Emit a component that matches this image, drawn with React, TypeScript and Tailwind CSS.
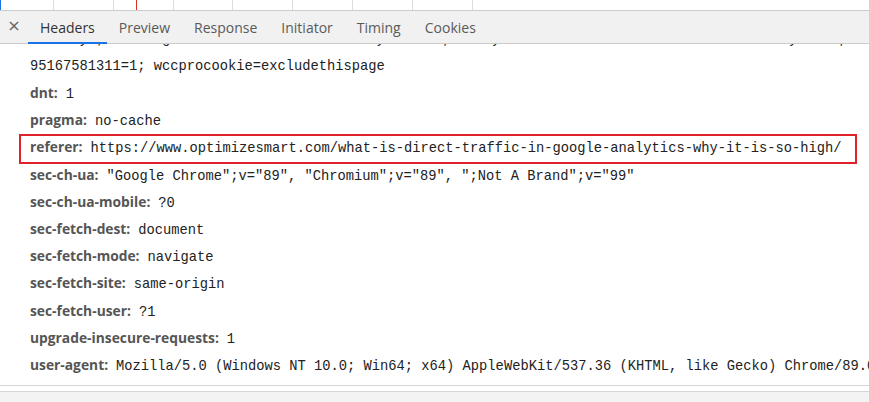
import React from "react";

const rows: [string, string][] = [
  ["dnt", "1"],
  ["pragma", "no-cache"],
  ["referer", "https://www.optimizesmart.com/what-is-direct-traffic-in-google-analytics-why-it-is-so-high/"],
  ["sec-ch-ua", "\"Google Chrome\";v=\"89\", \"Chromium\";v=\"89\", \";Not A Brand\";v=\"99\""],
  ["sec-ch-ua-mobile", "?0"],
  ["sec-fetch-dest", "document"],
  ["sec-fetch-mode", "navigate"],
  ["sec-fetch-site", "same-origin"],
  ["sec-fetch-user", "?1"],
  ["upgrade-insecure-requests", "1"],
  ["user-agent", "Mozilla/5.0 (Windows NT 10.0; Win64; x64) AppleWebKit/537.36 (KHTML, like Gecko) Chrome/89.0.4389.90 Safari/537.36"],
];

const mono = "font-['Liberation_Mono',monospace] text-[13.75px] text-[#222]";
const sans = "font-['Open_Sans',sans-serif] font-bold text-[13.8px] text-[#555]";

function Row({ name, value }: { name: string; value: string }) {
  const inner = (
    <div className="flex items-baseline whitespace-nowrap">
      <span className={sans}>{name}:</span>
      <span className={`${mono} ml-[8px] whitespace-pre`}>{value}</span>
    </div>
  );
  if (name === "referer") {
    return (
      <div className="h-[27.2px] flex items-center">
        <div className="ml-[19px] w-[838px] h-[30px] border-2 border-[#e0222c] pl-[9px] flex items-center shrink-0">
          {inner}
        </div>
      </div>
    );
  }
  return <div className="h-[27.2px] flex items-center pl-[30px]">{inner}</div>;
}

export default function App() {
  const gridLines = [53, 113, 173, 232, 292, 352, 412, 472];
  const tabs = ["Headers", "Preview", "Response", "Initiator", "Timing", "Cookies"];
  return (
    <div className="w-[869px] h-[402px] bg-white overflow-hidden flex flex-col">
      {/* timeline strip */}
      <div className="h-[10px] relative shrink-0 bg-white">
        <div className="absolute left-0 top-0 h-full w-px bg-[#1a73e8]" />
        {gridLines.map((x) => (
          <div key={x} className="absolute top-0 h-full w-px bg-[#dcdcdc]" style={{ left: x }} />
        ))}
        <div className="absolute top-0 h-full w-px bg-[#d93025]" style={{ left: 136 }} />
      </div>
      {/* tab bar */}
      <div className="h-[34px] shrink-0 bg-[#f1f1f1] border-t border-b border-[#cbcbcb] flex items-stretch font-['Open_Sans',sans-serif] text-[14px] relative z-10">
        <div className="w-[28px] flex items-center justify-center text-[#666] text-[16px] leading-none pb-[2px] font-['DejaVu_Sans',sans-serif]">
          ×
        </div>
        {tabs.map((t, i) => (
          <div
            key={t}
            className={`px-[12px] flex items-center relative ${i === 0 ? "text-[#333]" : "text-[#5a5a5a]"}`}
          >
            {t}
            {i === 0 && <div className="absolute left-0 right-0 bottom-[-1px] h-[2px] bg-[#1a73e8]" />}
          </div>
        ))}
      </div>
      {/* content */}
      <div className="flex-1 overflow-hidden">
        <div className="h-[9.6px] overflow-hidden">
          <div className={`h-[27.2px] mt-[-17.6px] flex items-center pl-[30px] whitespace-pre ${mono}`}>
            AMCV=1y1; 3D4E5FgA1B2C3D4E5F6A7B8C9D0E1F2Ay1B2C3D4,E5F6Ay7B8C9D0E1F2A3B4C5D6E7F8A9B0C1D2E3F4y5A6B7, 8C9D0E
          </div>
        </div>
        <div className={`h-[27.2px] flex items-center pl-[30px] whitespace-pre ${mono}`}>
          95167581311=1; wccprocookie=excludethispage
        </div>
        {rows.map(([n, v]) => (
          <Row key={n} name={n} value={v} />
        ))}
      </div>
      <div className="h-[6px] shrink-0 border-t border-[#d6d6d6] bg-white" />
      <div className="h-[11px] shrink-0 border-t border-[#d6d6d6] bg-[#f3f3f3]" />
    </div>
  );
}
